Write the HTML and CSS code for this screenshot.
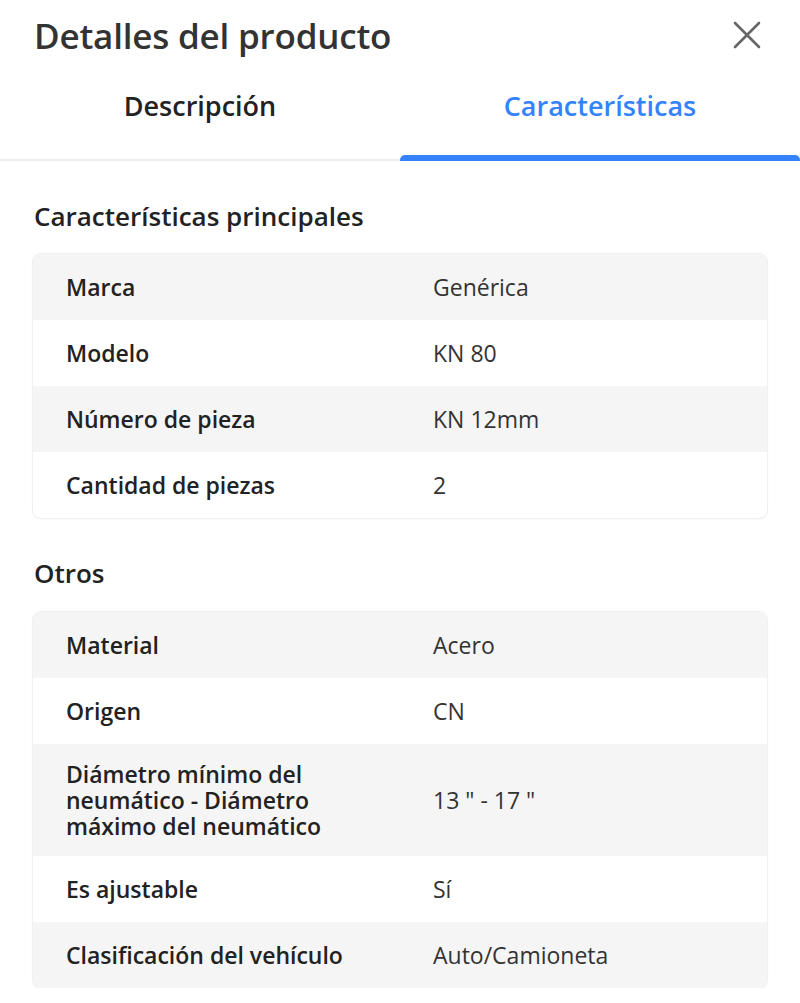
FILE: index.html
```html
<!DOCTYPE html>
<html lang="es">
<head>
<meta charset="utf-8">
<link rel="stylesheet" href="styles.css">
</head>
<body>
<div class="modal">
  <header class="head">
    <h1 class="title">Detalles del producto</h1>
    <button class="close" aria-label="Cerrar">
      <svg width="30" height="30" viewBox="0 0 30 30"><path d="M3 3 L27 27 M27 3 L3 27" stroke="#666" stroke-width="2.6" stroke-linecap="round" fill="none"/></svg>
    </button>
  </header>
  <nav class="tabs">
    <div class="tab">Descripción</div>
    <div class="tab active">Características</div>
  </nav>
  <section class="section">
    <h2 class="sec-title">Características principales</h2>
    <div class="table">
      <div class="row"><div class="lab">Marca</div><div class="val">Genérica</div></div>
      <div class="row"><div class="lab">Modelo</div><div class="val">KN 80</div></div>
      <div class="row"><div class="lab">Número de pieza</div><div class="val">KN 12mm</div></div>
      <div class="row"><div class="lab">Cantidad de piezas</div><div class="val">2</div></div>
    </div>
  </section>
  <section class="section">
    <h2 class="sec-title">Otros</h2>
    <div class="table">
      <div class="row"><div class="lab">Material</div><div class="val">Acero</div></div>
      <div class="row"><div class="lab">Origen</div><div class="val">CN</div></div>
      <div class="row"><div class="lab">Diámetro mínimo del neumático - Diámetro máximo del neumático</div><div class="val">13 " - 17 "</div></div>
      <div class="row"><div class="lab">Es ajustable</div><div class="val">Sí</div></div>
      <div class="row"><div class="lab">Clasificación del vehículo</div><div class="val">Auto/Camioneta</div></div>
    </div>
  </section>
</div>
</body>
</html>
```
FILE: styles.css
```css
* { box-sizing: border-box; }
html, body { margin: 0; padding: 0; background: #fff; }
body { font-family: "Open Sans", Lato, sans-serif; color: #333; width: 800px; }
.modal { width: 800px; }
.head { display: flex; justify-content: space-between; align-items: center; padding: 0 38px 0 34px; height: 70px; }
.title { margin: 0; font-size: 35px; font-weight: 600; color: #333; letter-spacing: -0.2px; }
.close { background: none; border: 0; padding: 0; width: 30px; height: 30px; display: flex; }
.tabs { display: grid; grid-template-columns: 1fr 1fr; border-bottom: 2px solid #ececec; height: 91px; }
.tab { display: flex; align-items: center; justify-content: center; font-size: 27px; font-weight: 600; color: #222; padding-bottom: 18px; position: relative; }
.tab.active { color: #3483fa; }
.tab.active::after { content: ""; position: absolute; left: 0; right: 0; bottom: -2px; height: 6px; background: #3483fa; border-radius: 5px 5px 0 0; }
.section { padding: 0 33px; }
.sec-title { margin: 0; font-size: 26px; font-weight: 600; color: #222; padding: 37px 1px 0; height: 93px; }
.section + .section .sec-title { height: 94px; }
.table { border-radius: 8px; box-shadow: 0 0 0 1px #f0f0f0, 0 1px 3px rgba(0,0,0,0.06); overflow: hidden; }
.row { display: grid; grid-template-columns: 1fr 1fr; align-items: center; min-height: 66px; padding: 17px 0; }
.row:nth-child(odd) { background: #f5f5f5; }
.lab, .val { padding: 0 33px; font-size: 23px; line-height: 26px; }
.lab { font-weight: 600; color: #222; }
.val { font-weight: 400; color: #333; }
```
